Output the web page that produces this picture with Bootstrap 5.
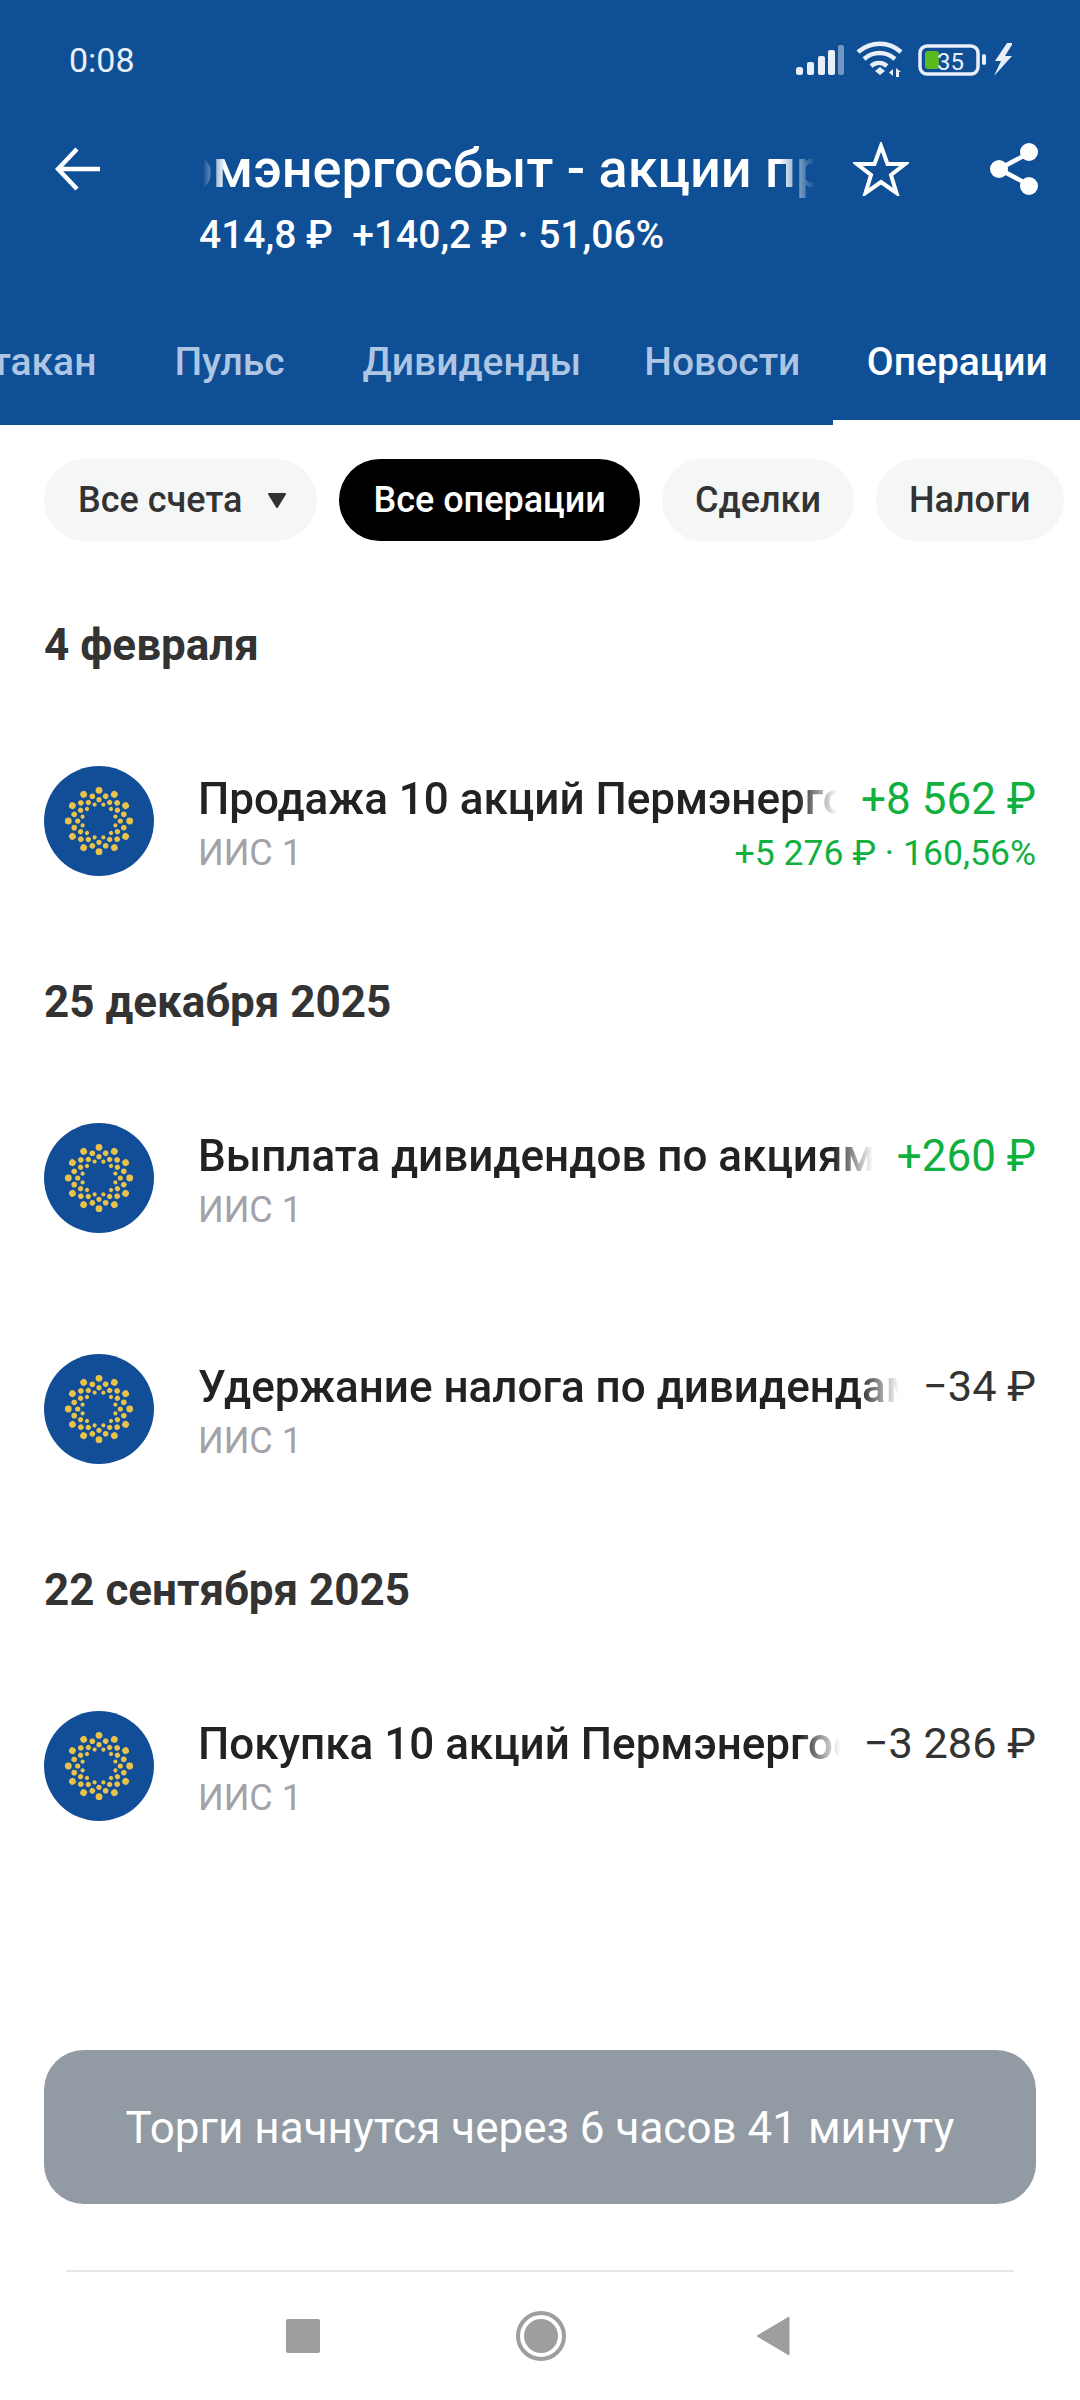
<!DOCTYPE html>
<html lang="ru">
<head>
<meta charset="utf-8">
<title>Операции</title>
<link rel="stylesheet" href="https://cdn.jsdelivr.net/npm/bootstrap@5.3.0/dist/css/bootstrap.min.css">
<style>
html,body{margin:0;width:1080px;height:2400px;background:#fff;overflow:hidden}
body{font-family:Roboto,"Liberation Sans",sans-serif;color:#222}
.shell{width:1080px;height:2400px}
.hdr{background:#0f4f96;color:#fff;height:425px}
.status{height:120px;padding:0 68px 0 69px}
.clock{font-size:34px;color:#e8eff8;line-height:1}
.title-row{height:98px;padding:0 40px 0 55px}
.title-clip{width:616px;margin-left:99px;flex:none;overflow:hidden;white-space:nowrap;font-size:54px;font-weight:500;line-height:70px;
 -webkit-mask-image:linear-gradient(to right,transparent 4px,#000 26px,#000 580px,transparent 616px);mask-image:linear-gradient(to right,transparent 4px,#000 26px,#000 580px,transparent 616px)}
.title-move{display:inline-block;margin-left:-84px}
.icon-star{margin-left:38px}
.icon-share{margin-left:78px}
.quote{padding-left:199px;font-size:39px;font-weight:500;line-height:44px;white-space:pre;margin-top:-5px}
.tabs{margin-top:59px;height:109px;overflow:hidden;white-space:nowrap;font-size:39px;font-weight:500;color:#aec6e4}
.tab{padding:0 33px;height:109px;line-height:92px;flex:none}
.tab-first{margin-left:-67px}
.tab-gap{margin-left:12px}
.tab-tight{margin-left:-3px}
.tab-on{color:#fff;border-bottom:5px solid #fff;width:248px}
.chips{padding:34px 0 39px 44px;gap:22px;overflow:hidden;white-space:nowrap}
.chip{height:82px;border-radius:41px;background:#f5f7f7;color:#333;font-size:36px;font-weight:500;padding:0 33px;line-height:82px;flex:none}
.chip-drop{padding:0 30px 0 34px}
.chip-on{background:#000;color:#fff;font-size:36px;padding:0 34px}
.caret{display:block;margin-left:25px}
.day{font-size:44px;font-weight:700;color:#333;line-height:60px;margin:35px 44px 31px}
.op{padding:60px 44px 61px;gap:44px}
.logo{width:110px;height:110px;flex:none;display:block}
.op-body{min-width:0;flex:1;margin-top:5px}
.op-line{gap:24px}
.op-title{flex:1;min-width:0;overflow:hidden;white-space:nowrap;font-size:44px;font-weight:500;line-height:56px;color:#222;
 -webkit-mask-image:linear-gradient(to right,#000 calc(100% - 40px),transparent);mask-image:linear-gradient(to right,#000 calc(100% - 40px),transparent)}
.amt{font-size:44px;line-height:56px;flex:none;color:#333}
.amt-neg{font-size:43.300px}
.up{color:#10b03e}
.op-sub{font-size:36px;line-height:44px;color:#a2a2a8;margin-top:4px}
.op-gain{font-size:35.600px;line-height:44px;margin-top:4px}
.main{flex:1;min-height:0}
.cta{margin:0 44px;height:154px;border-radius:40px;background:#929aa3;color:#fff;font-size:44px;line-height:156px;text-align:center}
.sysnav{margin:66px 66px 0;border-top:2px solid #e4e6e8;height:130px}
</style>
</head>
<body>
<svg width="0" height="0" class="d-block" aria-hidden="true">
<defs>
<g id="sp" fill="#e8c24a">
<circle cx="55" cy="24.3" r="3.4"/><circle cx="55" cy="33.7" r="2.6"/>
<circle cx="48.35" cy="30.2" r="2.8"/><circle cx="50.6" cy="38.6" r="2.1"/>
</g>
<symbol id="logo" viewBox="0 0 110 110">
<circle cx="55" cy="55" r="55" fill="#124d97"/>
<use href="#sp"/><use href="#sp" transform="rotate(30 55 55)"/><use href="#sp" transform="rotate(60 55 55)"/><use href="#sp" transform="rotate(90 55 55)"/><use href="#sp" transform="rotate(120 55 55)"/><use href="#sp" transform="rotate(150 55 55)"/><use href="#sp" transform="rotate(180 55 55)"/><use href="#sp" transform="rotate(210 55 55)"/><use href="#sp" transform="rotate(240 55 55)"/><use href="#sp" transform="rotate(270 55 55)"/><use href="#sp" transform="rotate(300 55 55)"/><use href="#sp" transform="rotate(330 55 55)"/>
</symbol>
</defs>
</svg>
<div class="shell d-flex flex-column">
<header class="hdr">
  <div class="status d-flex align-items-center justify-content-between">
    <span class="clock">0:08</span>
    <svg width="216" height="40" viewBox="795 40 216 40">
      <g fill="#e8eff8">
        <rect x="795" y="67" width="7" height="8" rx="2.5"/><rect x="806" y="62" width="7" height="13" rx="2"/><rect x="817" y="56" width="7" height="19" rx="2"/><rect x="827" y="50" width="7" height="25" rx="2"/>
        <rect x="837" y="45" width="6" height="30" rx="2" opacity=".45"/>
      </g>
      <g fill="none" stroke="#e8eff8" stroke-width="4.5">
        <path d="M857 52c13-11 31-11 43 0"/><path d="M863 59c9-8 22-8 31 0"/><path d="M870 66c5-4 11-4 16 0"/>
      </g>
      <path d="M874 71l5-4 5 4-5 4z" fill="#e8eff8"/>
      <path d="M892 69l-4 3.500 4 3.500zM895 68v9h3v-5h2z" fill="#e8eff8"/>
      <rect x="919" y="46" width="58" height="28" rx="7" fill="none" stroke="#e8eff8" stroke-width="3.500"/>
      <rect x="924" y="51" width="14" height="18" rx="3" fill="#5bb81e"/>
      <rect x="981" y="54" width="4" height="11" rx="2" fill="#e8eff8"/>
      <text x="936" y="70" font-family="Roboto,sans-serif" font-size="24" fill="#e8eff8">35</text>
      <path d="M1006 43l-12 18h6l-7 15 18-20h-7l8-13z" fill="#e8eff8"/>
    </svg>
  </div>
  <div class="title-row d-flex align-items-center">
    <svg width="45" height="44" viewBox="0 0 45 44" class="flex-shrink-0"><path d="M22 2L3 22l19 20M3 22h42" fill="none" stroke="#fff" stroke-width="4.500"/></svg>
    <div class="title-clip"><span class="title-move">Пермэнергосбыт - акции привилегированные</span></div>
    <svg width="56" height="54" viewBox="0 0 56 54" class="icon-star flex-shrink-0"><path d="M28 4l6.500 18H52L38 33l5.500 18L28 40 12.500 51 18 33 4 22h17.500z" fill="none" stroke="#fff" stroke-width="4"/></svg>
    <svg width="54" height="56" viewBox="0 0 54 56" class="icon-share flex-shrink-0"><path d="M42 12L12 28l30 16" fill="none" stroke="#fff" stroke-width="4.500"/><circle cx="42" cy="11" r="9" fill="#fff"/><circle cx="12" cy="28" r="9" fill="#fff"/><circle cx="42" cy="45" r="9" fill="#fff"/></svg>
  </div>
  <div class="quote">414,8 ₽  +140,2 ₽ · 51,06%</div>
  <nav class="tabs d-flex">
    <span class="tab tab-first">Стакан</span>
    <span class="tab tab-gap">Пульс</span>
    <span class="tab tab-gap">Дивиденды</span>
    <span class="tab tab-tight">Новости</span>
    <span class="tab tab-on text-center">Операции</span>
  </nav>
</header>
<main class="main">
  <div class="chips d-flex">
    <span class="chip chip-drop d-flex align-items-center">Все счета<svg class="caret" width="20" height="17" viewBox="0 0 20 17"><path d="M2 2h16l-8 13z" fill="#333" stroke="#333" stroke-width="2" stroke-linejoin="round"/></svg></span>
    <span class="chip chip-on">Все операции</span>
    <span class="chip">Сделки</span>
    <span class="chip">Налоги</span>
  </div>

  <div class="day">4 февраля</div>
  <div class="op d-flex">
    <svg class="logo"><use href="#logo"/></svg>
    <div class="op-body">
      <div class="op-line d-flex"><div class="op-title">Продажа 10 акций Пермэнергосбыт - акции привилегированные</div><div class="amt up">+8 562 ₽</div></div>
      <div class="d-flex justify-content-between"><span class="op-sub">ИИС 1</span><span class="op-gain up">+5 276 ₽ · 160,56%</span></div>
    </div>
  </div>

  <div class="day">25 декабря 2025</div>
  <div class="op d-flex">
    <svg class="logo"><use href="#logo"/></svg>
    <div class="op-body">
      <div class="op-line d-flex"><div class="op-title">Выплата дивидендов по акциям Пермэнергосбыт</div><div class="amt up">+260 ₽</div></div>
      <div class="op-sub">ИИС 1</div>
    </div>
  </div>
  <div class="op d-flex">
    <svg class="logo"><use href="#logo"/></svg>
    <div class="op-body">
      <div class="op-line d-flex"><div class="op-title">Удержание налога по дивидендам Пермэнергосбыт</div><div class="amt amt-neg">−34 ₽</div></div>
      <div class="op-sub">ИИС 1</div>
    </div>
  </div>

  <div class="day">22 сентября 2025</div>
  <div class="op d-flex">
    <svg class="logo"><use href="#logo"/></svg>
    <div class="op-body">
      <div class="op-line d-flex"><div class="op-title">Покупка 10 акций Пермэнергосбыт - акции привилегированные</div><div class="amt amt-neg">−3 286 ₽</div></div>
      <div class="op-sub">ИИС 1</div>
    </div>
  </div>
</main>
<div class="cta">Торги начнутся через 6 часов 41 минуту</div>
<div class="sysnav d-flex align-items-center justify-content-center">
  <svg width="508" height="54" viewBox="286 2308 508 54" class="d-block">
    <rect x="286" y="2318" width="34" height="34" rx="2" fill="#9e9e9e"/>
    <circle cx="541" cy="2335" r="23" fill="none" stroke="#9e9e9e" stroke-width="4"/>
    <circle cx="541" cy="2335" r="17" fill="#9e9e9e"/>
    <path d="M789 2316v38l-32-19z" fill="#9e9e9e" stroke="#9e9e9e" stroke-linejoin="round" stroke-width="1"/>
  </svg>
</div>
</div>
</body>
</html>
